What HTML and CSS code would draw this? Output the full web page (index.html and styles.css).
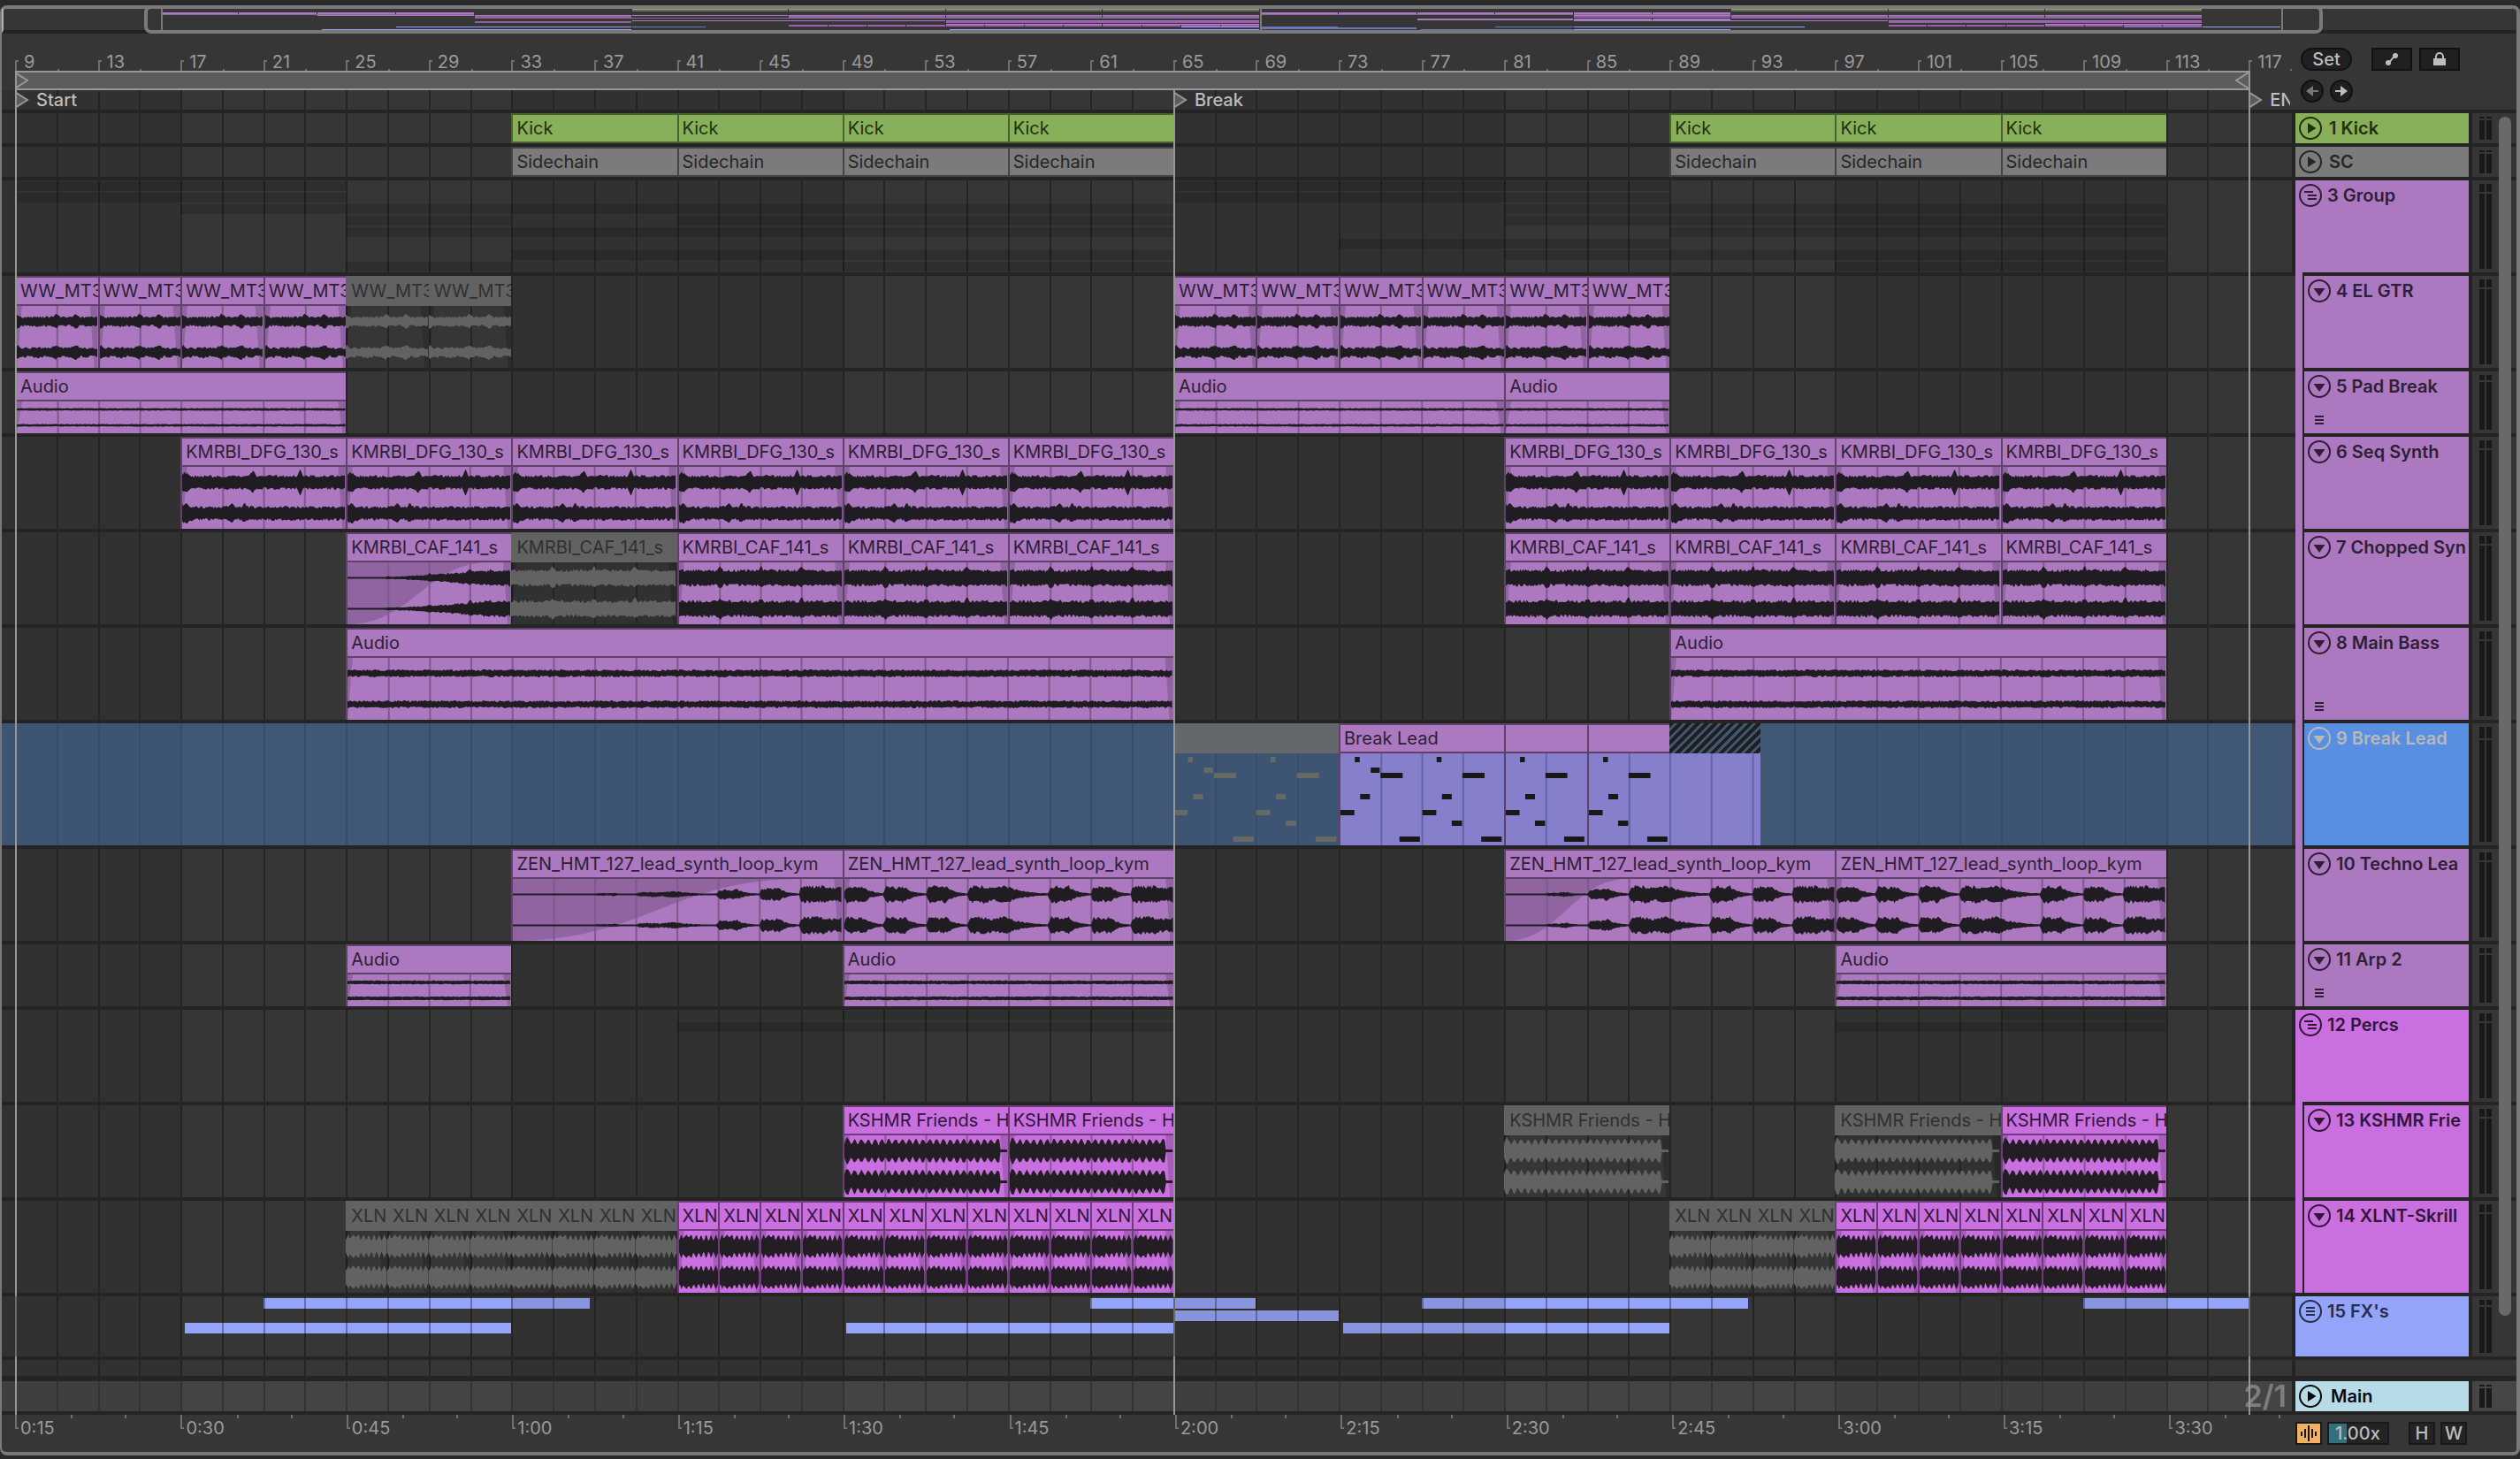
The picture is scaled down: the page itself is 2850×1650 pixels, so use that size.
FILE: index.html
```html
<!DOCTYPE html>
<html lang="en">
<head>
<meta charset="utf-8">
<title>Arrangement</title>
<link rel="stylesheet" href="styles.css">
</head>
<body>
<svg class="symbols" aria-hidden="true">
  <symbol id="i-play" viewBox="0 0 26 26"><circle cx="13" cy="13" r="12" fill="none" stroke="currentColor" stroke-width="2"/><path d="M10 7v12l9.500-6z" fill="currentColor"/></symbol>
  <symbol id="i-fold" viewBox="0 0 26 26"><circle cx="13" cy="13" r="12" fill="none" stroke="currentColor" stroke-width="2"/><path d="M6.500 10h13l-6.500 9z" fill="currentColor"/></symbol>
  <symbol id="i-group" viewBox="0 0 26 26"><circle cx="13" cy="13" r="12" fill="none" stroke="currentColor" stroke-width="2"/><path d="M6 9h10M10 13h10M10 17h10" stroke="currentColor" stroke-width="2"/></symbol>
  <symbol id="i-takes" viewBox="0 0 26 26"><circle cx="13" cy="13" r="12" fill="none" stroke="currentColor" stroke-width="2"/><path d="M8 9h10M8 13h10M8 17h10" stroke="currentColor" stroke-width="2"/></symbol>
  <symbol id="i-lines" viewBox="0 0 10 10"><path d="M0 1h10M0 5h10M0 9h10" stroke="currentColor" stroke-width="2"/></symbol>
  <symbol id="i-flag" viewBox="0 0 16 20"><path d="M0 1l14 9-14 9z" fill="#5c5c5c" stroke="#979797" stroke-width="2"/></symbol>
</svg>

<main class="frame">
  <section class="overview" id="overview" aria-label="Overview"></section>

  <div class="stage">
    <div class="backdrop" id="backdrop"></div>

    <header class="top">
      <div class="top-left">
        <div class="ruler" id="bar-ruler"></div>
        <div class="loop-row"><div class="bars"><div class="loop">
          <svg viewBox="0 0 16 18"><path d="M0 0l14 9-14 9" fill="none" stroke="#979797" stroke-width="2"/></svg>
          <svg viewBox="0 0 16 18"><path d="M16 0L2 9l14 9" fill="none" stroke="#979797" stroke-width="2"/></svg>
        </div></div></div>
        <div class="locators"><div class="bars" id="locators"></div></div>
      </div>
      <div class="top-right">
        <div class="tools">
          <button class="pill" type="button">Set</button>
          <button class="tool" type="button" aria-label="Automation mode"><svg width="16" height="16" viewBox="0 0 16 16"><path d="M4 12c4-2 4-6 8-8" fill="none" stroke="#bdbdbd" stroke-width="2"/><circle cx="4" cy="12" r="3" fill="#bdbdbd"/><circle cx="12" cy="4" r="3" fill="#bdbdbd"/></svg></button>
          <button class="tool" type="button" aria-label="Lock envelopes"><svg width="14" height="16" viewBox="0 0 14 16"><path d="M3 7V5a4 4 0 0 1 8 0v2" fill="none" stroke="#bdbdbd" stroke-width="2"/><path d="M0 7h14v8H0z" fill="#bdbdbd"/></svg></button>
        </div>
        <div class="tools arrows">
          <button class="round dim" type="button" aria-label="Previous locator"><svg width="16" height="14" viewBox="0 0 16 14"><path d="M1 7l8-6v12z" fill="currentColor"/><path d="M6 7h9" stroke="currentColor" stroke-width="2"/></svg></button>
          <button class="round" type="button" aria-label="Next locator"><svg width="16" height="14" viewBox="0 0 16 14"><path d="M15 7L7 1v12z" fill="currentColor"/><path d="M1 7h9" stroke="currentColor" stroke-width="2"/></svg></button>
        </div>
      </div>
    </header>

    <section class="tracks">
      <div class="track small green"><div class="lane" data-track="kick"></div><div class="head"><button class="fold" type="button" aria-label="Unfold"><svg><use href="#i-play"/></svg></button><span class="name wide">1 Kick</span></div><div class="meter"><i></i><i></i><i></i><i></i></div></div>
      <div class="track small grey"><div class="lane" data-track="sc"></div><div class="head"><button class="fold" type="button" aria-label="Unfold"><svg><use href="#i-play"/></svg></button><span class="name wide">SC</span></div><div class="meter"><i></i><i></i><i></i><i></i></div></div>
      <div class="track tall purple parent"><div class="lane" data-group="gtr pad seq chop bass lead zen arp"></div><div class="head"><button class="fold" type="button" aria-label="Fold group"><svg><use href="#i-group"/></svg></button><span class="name">3 Group</span></div><div class="meter"><i></i><i></i><i></i><i></i></div></div>
      <div class="track tall purple child"><div class="lane" data-track="gtr"></div><div class="head"><button class="fold" type="button" aria-label="Fold"><svg><use href="#i-fold"/></svg></button><span class="name">4 EL GTR</span></div><div class="meter"><i></i><i></i><i></i><i></i></div></div>
      <div class="track mid purple child"><div class="lane" data-track="pad"></div><div class="head"><button class="fold" type="button" aria-label="Fold"><svg><use href="#i-fold"/></svg></button><span class="name">5 Pad Break</span><svg class="lines"><use href="#i-lines"/></svg></div><div class="meter"><i></i><i></i><i></i><i></i></div></div>
      <div class="track tall purple child"><div class="lane" data-track="seq"></div><div class="head"><button class="fold" type="button" aria-label="Fold"><svg><use href="#i-fold"/></svg></button><span class="name">6 Seq Synth</span></div><div class="meter"><i></i><i></i><i></i><i></i></div></div>
      <div class="track tall purple child"><div class="lane" data-track="chop"></div><div class="head"><button class="fold" type="button" aria-label="Fold"><svg><use href="#i-fold"/></svg></button><span class="name">7 Chopped Syn</span></div><div class="meter"><i></i><i></i><i></i><i></i></div></div>
      <div class="track tall purple child"><div class="lane" data-track="bass"></div><div class="head"><button class="fold" type="button" aria-label="Fold"><svg><use href="#i-fold"/></svg></button><span class="name">8 Main Bass</span><svg class="lines"><use href="#i-lines"/></svg></div><div class="meter"><i></i><i></i><i></i><i></i></div></div>
      <div class="track lead purple child selected"><div class="lane" data-track="lead"></div><div class="head"><button class="fold" type="button" aria-label="Fold"><svg><use href="#i-fold"/></svg></button><span class="name">9 Break Lead</span></div><div class="meter"><i></i><i></i><i></i><i></i></div></div>
      <div class="track tall purple child"><div class="lane" data-track="zen"></div><div class="head"><button class="fold" type="button" aria-label="Fold"><svg><use href="#i-fold"/></svg></button><span class="name">10 Techno Lea</span></div><div class="meter"><i></i><i></i><i></i><i></i></div></div>
      <div class="track mid purple child last"><div class="lane" data-track="arp"></div><div class="head"><button class="fold" type="button" aria-label="Fold"><svg><use href="#i-fold"/></svg></button><span class="name">11 Arp 2</span><svg class="lines"><use href="#i-lines"/></svg></div><div class="meter"><i></i><i></i><i></i><i></i></div></div>
      <div class="track tall magenta parent"><div class="lane" data-group="kshmr xlnt"></div><div class="head"><button class="fold" type="button" aria-label="Fold group"><svg><use href="#i-group"/></svg></button><span class="name">12 Percs</span></div><div class="meter"><i></i><i></i><i></i><i></i></div></div>
      <div class="track tall magenta child"><div class="lane" data-track="kshmr"></div><div class="head"><button class="fold" type="button" aria-label="Fold"><svg><use href="#i-fold"/></svg></button><span class="name">13 KSHMR Frie</span></div><div class="meter"><i></i><i></i><i></i><i></i></div></div>
      <div class="track tall magenta child last"><div class="lane" data-track="xlnt"></div><div class="head"><button class="fold" type="button" aria-label="Fold"><svg><use href="#i-fold"/></svg></button><span class="name">14 XLNT-Skrill</span></div><div class="meter"><i></i><i></i><i></i><i></i></div></div>
      <div class="track fx blue"><div class="lane" data-fx="fx"></div><div class="head"><button class="fold" type="button" aria-label="Show takes"><svg><use href="#i-takes"/></svg></button><span class="name">15 FX's</span></div><div class="meter"><i></i><i></i><i></i><i></i></div></div>
      <div class="track drop"><div class="lane"></div><div class="blank"></div></div>
      <div class="track small main"><div class="lane"><span class="beat">2/1</span></div><div class="head"><button class="fold" type="button" aria-label="Unfold"><svg><use href="#i-play"/></svg></button><span class="name wide">Main</span></div><div class="meter"><i></i><i></i><i></i><i></i></div></div>
    </section>

    <div class="marks" id="marks"></div>
    <div class="scrollbar"></div>
  </div>

  <footer class="bottom">
    <div class="times" id="time-ruler"></div>
    <div class="controls">
      <button class="wavebtn" type="button" aria-label="Waveform zoom"><svg width="20" height="20" viewBox="0 0 20 20"><path d="M2 8v5M6 5v10M10 1v18M14 5v10M18 8v5" stroke="#191919" stroke-width="2"/></svg></button>
      <input class="factor" type="text" value="1.00x" aria-label="Waveform zoom factor">
      <button class="box first" type="button">H</button>
      <button class="box" type="button">W</button>
    </div>
  </footer>
</main>
<script src="script.js"></script>
</body>
</html>
```
FILE: styles.css
```css
* { box-sizing: border-box; }

body {
  margin: 0;
  padding: 6px 0 4px;
  background: #2a2a2a;
  font-family: Inter, "Open Sans", "Liberation Sans", sans-serif;
  font-size: 20px;
  line-height: 34px;
  color: #9a9a9a;
}

button, input { font: inherit; color: inherit; margin: 0; padding: 0; border: 0; background: none; }
svg { display: block; }
.symbols { position: absolute; width: 0; height: 0; }

.frame {
  background: #363636;
  border: 4px solid #7a7a7a;
  border-left-width: 2px;
  border-radius: 8px;
}

/* overview */
.overview {
  position: relative;
  height: 28px;
  border-bottom: 4px solid #242424;
  border-left: 2px solid #b0b0b0;
  display: grid;
  grid-template-rows: repeat(14, minmax(0, 1fr)) repeat(3, minmax(0, 1fr));
}
.ov-row { display: grid; grid-template-columns: repeat(640, minmax(0, 1fr)); min-height: 0; }
.ov-row i { grid-row: 1; margin-right: 1px; }
.viewport {
  position: absolute;
  top: -4px;
  bottom: -4px;
  border: 4px solid #7a7a7a;
  border-radius: 8px;
}
.ov-line { position: absolute; top: 0; bottom: 0; width: 2px; background: #7a7a7a; }

/* shared bar grid */
.stage { position: relative; }
.bars, .lane { display: grid; grid-template-columns: repeat(550, minmax(0, 1fr)); }
.backdrop {
  position: absolute;
  inset: 0 256px 0 15px;
  display: grid;
  grid-template-columns: repeat(55, minmax(0, 1fr));
}
.backdrop i { background: #313131; border-left: 2px solid #242424; }
.backdrop i.light { background: #363636; }
.backdrop::before { content: ""; position: absolute; left: -15px; width: 15px; top: 0; bottom: 0; background: #313131; }

.top { position: relative; display: flex; border-bottom: 4px solid #242424; }
.top-left { flex: 1; min-width: 0; }
.top-right { width: 254px; background: #363636; padding: 16px 0 0 10px; }
.ruler {
  height: 42px;
  padding: 0 2px 0 15px;
  background: #363636;
  display: grid;
  grid-template-columns: repeat(27, minmax(0, 4fr)) minmax(0, 2fr);
  align-items: end;
}
.tick {
  position: relative;
  height: 12px;
  border-left: 2px solid #6f6f6f;
  line-height: 20px;
  padding-left: 8px;
}
.tick span { display: block; margin-top: -8px; white-space: nowrap; }
.tick::before { content: ""; position: absolute; left: 0; top: 0; width: 2px; height: 2px; background: #6f6f6f; }
.tick::after { content: ""; position: absolute; left: 50%; bottom: 0; width: 2px; height: 2px; background: #6f6f6f; }
.tick:last-child::after { left: 100%; }

.loop-row { height: 22px; padding: 0 2px 0 15px; background: #363636; }
.loop {
  grid-column: 1 / 541;
  height: 22px;
  background: #5c5c5c;
  border: solid #979797;
  border-width: 2px 0;
  display: flex;
  justify-content: space-between;
}
.loop svg { width: 16px; height: 18px; }
.locators { height: 22px; padding: 0 2px 0 15px; }
.locator { grid-row: 1; display: flex; gap: 8px; height: 22px; line-height: 22px; color: #bdbdbd; overflow: hidden; white-space: nowrap; align-items: center; font-weight: 500; }
.locator svg { flex: none; width: 16px; height: 20px; }

.tools { display: flex; gap: 8px; height: 26px; line-height: 22px; color: #bdbdbd; }
.tools + .tools { margin-top: 10px; gap: 7px; }
.pill { width: 58px; height: 26px; border: 2px solid #111; border-radius: 13px; background: #202020; font-weight: 500; margin-right: 14px; }
.tool { width: 46px; height: 26px; border: 2px solid #111; background: #202020; display: grid; place-items: center; }
.round { width: 26px; height: 26px; border: 2px solid #111; border-radius: 13px; background: #202020; display: grid; place-items: center; }
.round.dim { color: #777; }

/* tracks */
.tracks { position: relative; }
.track {
  display: grid;
  grid-template-columns: minmax(0, 1fr) 196px 50px;
  column-gap: 4px;
  border-bottom: 4px solid #242424;
}
.small { height: 38px; }
.mid { height: 74px; }
.tall { height: 108px; }
.lead { height: 142px; }
.fx { height: 72px; }
.drop { height: 24px; border-bottom-width: 6px; }

.green { --tone: #88b05b; --edge: #4c6331; --ink: #22300f; --wire: #4c6331; --wave: #1f1c22; }
.grey { --tone: #7b7b7b; --edge: #444; --ink: #262626; --wire: #444; --wave: #1f1c22; }
.purple { --tone: #ac78c0; --edge: #5f4269; --ink: #2e1f35; --wire: #7d5a8b; --wave: #1f1c22; }
.magenta { --tone: #c96fe0; --edge: #6e3c7b; --ink: #32163a; --wire: #8f51a0; --wave: #231e24; }
.blue { --tone: #94a4f8; --edge: #5c659c; --ink: #262c4a; --wire: #6872b0; --wave: #1f1c22; }
.main { --tone: #b7dce7; --ink: #0a0a0a; }

.lane { padding: 0 2px 0 15px; min-width: 0; position: relative; overflow: hidden; }
.main .lane { background: rgba(255, 255, 255, .07); }
.head, .meter, .blank { box-shadow: -4px 0 #242424; }
.head {
  position: relative;
  display: flex;
  align-items: flex-start;
  padding: 4px 4px 0;
  gap: 8px;
  background: var(--tone);
  color: var(--ink);
  font-weight: 600;
}
.fold, .fold svg { width: 26px; height: 26px; }
.name { line-height: 26px; white-space: nowrap; margin-left: -2px; }
.name.wide { margin-left: 0; }
.main .name { margin-left: 2px; }
.lines { position: absolute; left: 12px; bottom: 10px; width: 10px; height: 10px; }
.child .head { margin-left: 10px; box-shadow: -2px 0 #242424; }
.child .head::before {
  content: "";
  position: absolute;
  left: -10px;
  top: 0;
  bottom: -4px;
  width: 8px;
  background: var(--tone);
}
.parent .head::before { content: ""; position: absolute; left: 0; bottom: -4px; width: 8px; height: 4px; background: var(--tone); }
.child.last .head::before { bottom: 0; }
.selected .head { background: #588fe0; color: #b9b9b9; }
.blank { grid-column: 2 / 4; background: #363636; }

.meter {
  background: #363636;
  padding: 4px 28px 4px 8px;
  display: grid;
  grid-template-columns: 6px 6px;
  grid-template-rows: minmax(0, 1fr) minmax(0, 9fr);
  gap: 2px;
}
.meter i { background: #191919; }
.main .meter { background: #464646; }
.drop .lane { min-height: 18px; }

/* clips */
.clip {
  grid-row: 1;
  min-width: 0;
  display: flex;
  flex-direction: column;
  overflow: hidden;
  background: var(--tone);
  border: 0 solid var(--edge);
  border-width: 2px 0 0 2px;
  color: var(--ink);
}
.small .clip { border-bottom-width: 2px; }
.title {
  flex: none;
  height: 32px;
  line-height: 30px;
  padding-left: 4px;
  white-space: nowrap;
  overflow: hidden;
  border-bottom: 2px solid var(--edge);
}
.small .title { height: 30px; border-bottom: 0; }
.body { flex: 1; min-height: 0; position: relative; }
.body svg { width: 100%; height: 100%; }
.wire { stroke: var(--wire); stroke-width: 2; }
.shade { fill: #000; opacity: .16; }
.wave { fill: var(--wave); }
.muted { background: none; border-width: 0; color: #303030; }
.muted .title { height: 34px; line-height: 34px; padding-left: 6px; background: #626262; border-bottom: 0; }
.muted .wire { stroke: none; }
.muted .wave { fill: #626262; }

.selected .lane { background: rgba(80, 140, 215, .4); }
.selected .body { background: #8680cc; --wire: #6264a8; }
.selected .muted .body { background: none; }
.selected .muted .title { background: #65686b; }
.note { fill: #191919; }
.muted .note { fill: #666964; }
.hatch { grid-row: 1; display: flex; flex-direction: column; }
.hatch::before { content: ""; height: 34px; background: repeating-linear-gradient(135deg, #1f1f1f 0 4px, #3f5673 4px 7px); }
.hatch .body { flex: 1; }

.strips { grid-column: 1 / 551; display: flex; flex-direction: column; gap: 2px; padding-top: 1px; }
.strip { height: 11px; display: grid; grid-template-columns: repeat(550, minmax(0, 1fr)); }
.strip i { grid-row: 1; background: rgba(0, 0, 0, .14); }

.takes { grid-column: 1 / 551; grid-row: 1; display: grid; grid-template-columns: repeat(550, minmax(0, 1fr)); grid-template-rows: 12px 12px 12px; row-gap: 2px; padding-top: 2px; }
.takes i { background: #94a4f8; }
.takes i.dim { background: #8994de; }
.takes-wires { grid-column: 1 / 551; grid-row: 1; display: grid; grid-template-columns: repeat(55, minmax(0, 1fr)); z-index: 1; }
.takes-wires i { border-left: 2px solid rgba(36, 36, 36, .4); }

.beat {
  grid-column: 1 / 551;
  text-align: right;
  padding-right: 4px;
  font-size: 34px;
  font-weight: 600;
  color: #7d7d7d;
}

.marks { position: absolute; inset: 42px 256px 0 15px; pointer-events: none; }
.marks i { position: absolute; top: 0; bottom: 0; width: 2px; background: #979797; }
.marks i.short { top: 22px; }
.scrollbar { position: absolute; right: 6px; top: 94px; bottom: 112px; width: 14px; border-radius: 7px; background: #696969; }

/* bottom bar */
.bottom { display: flex; height: 42px; }
.times {
  flex: 1;
  min-width: 0;
  padding: 0 2px 0 15px;
  display: grid;
  grid-template-columns: repeat(13, minmax(0, 8fr)) minmax(0, 6fr);
}
.time { position: relative; height: 16px; border-left: 2px solid #6f6f6f; padding-left: 4px; }
.time span { display: block; line-height: 30px; white-space: nowrap; }
.time::before { content: ""; position: absolute; left: 0; bottom: 0; width: 2px; height: 2px; background: #6f6f6f; }
.time i { position: absolute; top: 0; width: 2px; height: 4px; background: #6f6f6f; }
.time i:nth-of-type(1) { left: 33%; }
.time i:nth-of-type(2) { left: 66%; }
.time:last-child i:nth-of-type(1) { left: 44%; }
.time:last-child i:nth-of-type(2) { left: 88%; }
.controls { width: 250px; display: flex; gap: 6px; padding-top: 8px; line-height: 22px; color: #bdbdbd; font-weight: 500; }
.wavebtn { width: 30px; height: 26px; border: 2px solid #191919; background: #f2b066; display: grid; place-items: center; }
.factor { width: 70px; height: 26px; border: 2px solid #191919; background: linear-gradient(90deg, #32707f 20px, #242424 20px); padding-left: 7px; }
.box { width: 30px; height: 26px; border: 2px solid #191919; background: #242424; }
.box.first { margin-left: 16px; }
```
FILE: script.js
```js
const FIRST = 9;
const BAR = 23.39;
const NS = 'http://www.w3.org/2000/svg';

const every = (from, to, step, name, extra) => {
  const out = [];
  for (let b = from; b < to; b += step) out.push({ s: b, e: b + step, name, ...extra });
  return out;
};
const off = { muted: true };
const SEQ = 'KMRBI_DFG_130_s', CHOP = 'KMRBI_CAF_141_s', ZEN = 'ZEN_HMT_127_lead_synth_loop_kym', KS = 'KSHMR Friends - Ha';

const clips = {
  kick: [...every(33, 65, 8, 'Kick'), ...every(89, 113, 8, 'Kick')],
  sc: [...every(33, 65, 8, 'Sidechain'), ...every(89, 113, 8, 'Sidechain')],
  gtr: [...every(9, 25, 4, 'WW_MT3'), ...every(25, 33, 4, 'WW_MT3', off), ...every(65, 89, 4, 'WW_MT3')],
  pad: [...every(9, 25, 16, 'Audio'), ...every(65, 81, 16, 'Audio'), ...every(81, 89, 8, 'Audio')],
  seq: [...every(17, 65, 8, SEQ), ...every(81, 113, 8, SEQ)],
  chop: [...every(25, 33, 8, CHOP, { fade: .87 }), ...every(33, 41, 8, CHOP, off), ...every(41, 65, 8, CHOP), ...every(81, 113, 8, CHOP)],
  bass: [...every(25, 65, 40, 'Audio'), ...every(89, 113, 24, 'Audio')],
  lead: [{ s: 65, e: 73, name: '', muted: true }, { s: 73, e: 81, name: 'Break Lead' }, { s: 81, e: 85, name: '' }, { s: 85, e: 89, name: '' }],
  zen: [...every(33, 49, 16, ZEN, { fade: .88 }), ...every(49, 65, 16, ZEN), ...every(81, 97, 16, ZEN, { fade: .37 }), ...every(97, 113, 16, ZEN)],
  arp: [...every(25, 33, 8, 'Audio'), ...every(49, 65, 16, 'Audio'), ...every(97, 113, 16, 'Audio')],
  kshmr: [...every(49, 65, 8, KS), ...every(81, 89, 8, KS, off), ...every(97, 105, 8, KS, off), ...every(105, 113, 8, KS)],
  xlnt: [...every(25, 41, 2, 'XLNT', off), ...every(41, 65, 2, 'XLNT'), ...every(89, 97, 2, 'XLNT', off), ...every(97, 113, 2, 'XLNT')]
};

const takes = [
  [[21, 33], [33, 36.8, 1], [61, 65], [65, 69, 1], [77, 81, 1], [81, 92.8], [109, 113, 1], [113, 117]],
  [[65, 73, 1]],
  [[17.2, 33], [49.2, 65], [73.2, 81, 1], [81, 89]]
];

const col = bar => Math.round((bar - FIRST) * 5) + 1;
const span = (s, e) => `grid-column:${col(s)}/${col(e)}`;

const el = (tag, cls, parent, style) => {
  const n = document.createElement(tag);
  if (cls) n.className = cls;
  if (style) n.style.cssText = style;
  parent.appendChild(n);
  return n;
};
const svg = (tag, attrs, parent) => {
  const n = document.createElementNS(NS, tag);
  for (const k in attrs) n.setAttribute(k, attrs[k]);
  parent.appendChild(n);
  return n;
};

function random(seed) {
  let a = seed;
  return () => {
    a = (a * 1664525 + 1013904223) % 4294967296;
    return a / 4294967296;
  };
}

const near = (t, at, width) => Math.max(0, 1 - Math.abs(t - at) / width);

// Half height in pixels of each kind of audio at position t (0..1) and pixel x.
const shapes = {
  gtr: (t, x, r, up) => 3.500 + r() * 2.500 + 3 * near(t, .48, .06) + 4 * near(t, .73, .05) + 3 * near(t, .01, .05) + (up ? 0 : 2 * near(t, .25, .08)),
  pad: (t, x, r) => 1 + r() * .6,
  seq: (t, x, r, up, ch) => 5.500 + r() * 3 + 4 * near(t, .02, .04) + (ch ? 4 * near(t, .3, .02) + 4 * near(t, .38, .02) : 6 * near(t, .43, .025) + 10 * near(t, .72, .015)),
  chop: (t, x, r, up) => 6.500 + r() * 3.500 + (up ? 5 : 3) * (near(t, .25, .02) + near(t, .5, .015) + near(t, .75, .02)),
  bass: (t, x, r) => 2.500 + r() * 2,
  arp: (t, x, r) => 1.500 + r() * .8,
  zen: (t, x, r) => {
    const hits = [[0, .12], [.12, .245], [.25, .37], [.375, .615], [.62, .745], [.75, .865], [.87, 1.2]];
    const h = hits.find(([a, b]) => t >= a && t < b);
    if (!h) return 1;
    const p = (t - h[0]) / (h[1] - h[0]);
    const rise = Math.min(1, (t - h[0]) / .01 + .3);
    const fall = p < .5 ? 1 - .25 * near(p, .32, .1) : Math.exp(-(p - .5) * 5);
    return (6 + r() * 4) * rise * fall + .5;
  },
  kshmr: (t, x, r) => t > .95 ? 1.500 : 6 + 6.500 * Math.pow(Math.abs(Math.sin(x * Math.PI / 7.800)), 1.300) + r() * 1.500 + 3 * near(t, .01, .02),
  xlnt: (t, x, r) => {
    const depth = t > .12 && t < .3 ? .5 : 1;
    return 13.500 - 8 * depth * Math.pow(Math.abs(Math.cos(x * Math.PI / 5.800)), 1.600) * (.6 + r() * .4);
  }
};

function envelope(fade, t) {
  if (!fade || t >= fade) return 1;
  return .04 + .96 * Math.pow(t / fade, 1.800);
}

function wavePath(kind, w, h, fade) {
  const r = random(kind.length * 7919 + kind.charCodeAt(0) * 131);
  let d = '';
  [.25, .75].forEach((c, ch) => {
    const mid = h * c, top = [], low = [];
    for (let x = 0; x <= w; x += 1.500) {
      const t = x / w, k = envelope(fade, t);
      const a = Math.max(1, shapes[kind](t, x, r, true, ch) * k);
      const b = Math.max(1, shapes[kind](t, x, r, false, ch) * k);
      top.push(`${x.toFixed(1)} ${(mid - a).toFixed(1)}`);
      low.unshift(`${x.toFixed(1)} ${(mid + (kind === 'xlnt' ? a : b)).toFixed(1)}`);
    }
    d += `M${top.join('L')}L${low.join('L')}z`;
  });
  return d;
}

const notes = [[0, .17, 64], [.175, .235, 4], [.24, .36, 46], [.49, .76, 22], [.72, .97, 94]];

function drawBody(body, kind, clip, h) {
  const w = (clip.e - clip.s) * BAR;
  const s = svg('svg', { viewBox: `0 0 ${w.toFixed(1)} ${h}`, preserveAspectRatio: 'none' }, body);
  if (kind === 'lead') {
    wires(s, clip, w, h);
    for (let b = clip.s, i = 0; b < clip.e; b += 4, i++) {
      const last = i || b >= 81 ? [.36, .485, 76] : [.37, .48, 16];
      [...notes, last].forEach(([a, z, y]) => svg('rect', { class: 'note', x: ((b - clip.s + a * 4) * BAR).toFixed(1), y, width: ((z - a) * 4 * BAR).toFixed(1), height: 6 }, s));
    }
    return;
  }
  if (clip.fade) {
    const f = w * clip.fade;
    svg('path', { class: 'shade', d: `M0 0V${h}C${f * .45} ${h} ${f * .55} 0 ${f} 0z` }, s);
  } else {
    svg('path', { class: 'shade', d: `M0 0H6L0 ${h}z` }, s);
  }
  svg('path', { class: 'shade', d: `M${w - 9} 0H${w}V${h}H${w - 4}z` }, s);
  wires(s, clip, w, h);
  svg('path', { class: 'wave', d: wavePath(kind, w, h, clip.fade) }, s);
}

function wires(s, clip, w, h) {
  for (let b = 2; b < clip.e - clip.s; b += 2) {
    svg('path', { class: 'wire', d: `M${(b * BAR).toFixed(1)} 0V${h}` }, s);
  }
}

document.querySelectorAll('[data-track]').forEach(lane => {
  const kind = lane.dataset.track;
  const track = lane.parentElement;
  const h = track.classList.contains('mid') ? 36 : track.classList.contains('lead') ? 104 : 70;
  clips[kind].forEach(c => {
    const node = el('div', 'clip' + (c.muted ? ' muted' : ''), lane, span(c.s, c.e));
    el('div', 'title', node).textContent = c.name;
    if (!track.classList.contains('small')) drawBody(el('div', 'body', node), kind, c, h);
  });
  if (kind === 'lead') {
    const tail = el('div', 'hatch', lane, span(89, 93.4));
    const s = svg('svg', { viewBox: `0 0 ${4.400 * BAR} 104`, preserveAspectRatio: 'none' }, el('div', 'body', tail));
    for (let b = 0; b < 4.400; b += 2) svg('path', { class: 'wire', d: `M${b * BAR + 1} 0V104` }, s);
  }
});

document.querySelectorAll('[data-group]').forEach(lane => {
  const box = el('div', 'strips', lane);
  lane.dataset.group.split(' ').forEach(kind => {
    const strip = el('div', 'strip', box);
    clips[kind].filter(c => !c.muted).forEach(c => el('i', '', strip, span(c.s, c.e)));
  });
});

const fx = document.querySelector('[data-fx]');
const takeBox = el('div', 'takes', fx);
takes.forEach((row, i) => row.forEach(([s, e, dim]) => el('i', dim ? 'dim' : '', takeBox, `${span(s, e)};grid-row:${i + 1}`)));
const over = el('div', 'takes-wires', fx);
for (let i = 0; i < 55; i++) el('i', '', over);

const backdrop = document.getElementById('backdrop');
for (let b = 9; b < 119; b += 2) el('i', Math.floor((b - 1) / 16) % 2 ? 'light' : '', backdrop);

const ruler = document.getElementById('bar-ruler');
for (let b = 9; b <= 117; b += 4) el('span', '', el('div', 'tick', ruler)).textContent = b;

const times = document.getElementById('time-ruler');
for (let i = 1; i <= 14; i++) {
  const t = el('div', 'time', times), sec = i * 15;
  el('span', '', t).textContent = `${Math.floor(sec / 60)}:${String(sec % 60).padStart(2, '0')}`;
  el('i', '', t);
  el('i', '', t);
}

const locators = document.getElementById('locators');
[[9, 65, 'Start'], [65, 117, 'Break'], [117, 119, 'END']].forEach(([s, e, text]) => {
  const n = el('div', 'locator', locators, span(s, e));
  const f = svg('svg', {}, n);
  svg('use', { href: '#i-flag' }, f);
  el('span', '', n).textContent = text;
});

const marks = document.getElementById('marks');
[9, 65, 117].forEach(b => el('i', b === 65 ? 'short' : '', marks, `left:${(b - FIRST) / 110 * 100}%`));

const overview = document.getElementById('overview');
const rows = [['kick', '#88b05b'], ['sc', '#666'], [], ['gtr', '#ac78c0'], ['pad', '#8d64a0'], ['seq', '#ac78c0'], ['chop', '#8d64a0'], ['bass', '#8d64a0'], ['lead', '#ac78c0'], ['zen', '#ac78c0'], ['arp', '#8d64a0'], [], ['kshmr', '#c96fe0'], ['xlnt', '#a35ab5']];
rows.forEach(([kind, color]) => {
  const row = el('div', 'ov-row', overview);
  (clips[kind] || []).filter(c => !c.muted).forEach(c => el('i', '', row, `grid-column:${(c.s - 1) * 5 + 1}/${(c.e - 1) * 5 + 1};background:${color}`));
});
takes.forEach(list => {
  const row = el('div', 'ov-row', overview);
  list.forEach(([s, e, dim]) => el('i', '', row, `grid-column:${Math.round((s - 1) * 5) + 1}/${Math.round((e - 1) * 5) + 1};background:${dim ? '#6b7ac0' : '#94a4f8'}`));
});
[9, 65, 117].forEach(b => el('i', 'ov-line', overview, `left:${(b - 1) / 128 * 100}%`));
el('div', 'viewport', overview, 'left:5.6%;right:7.7%');
```
